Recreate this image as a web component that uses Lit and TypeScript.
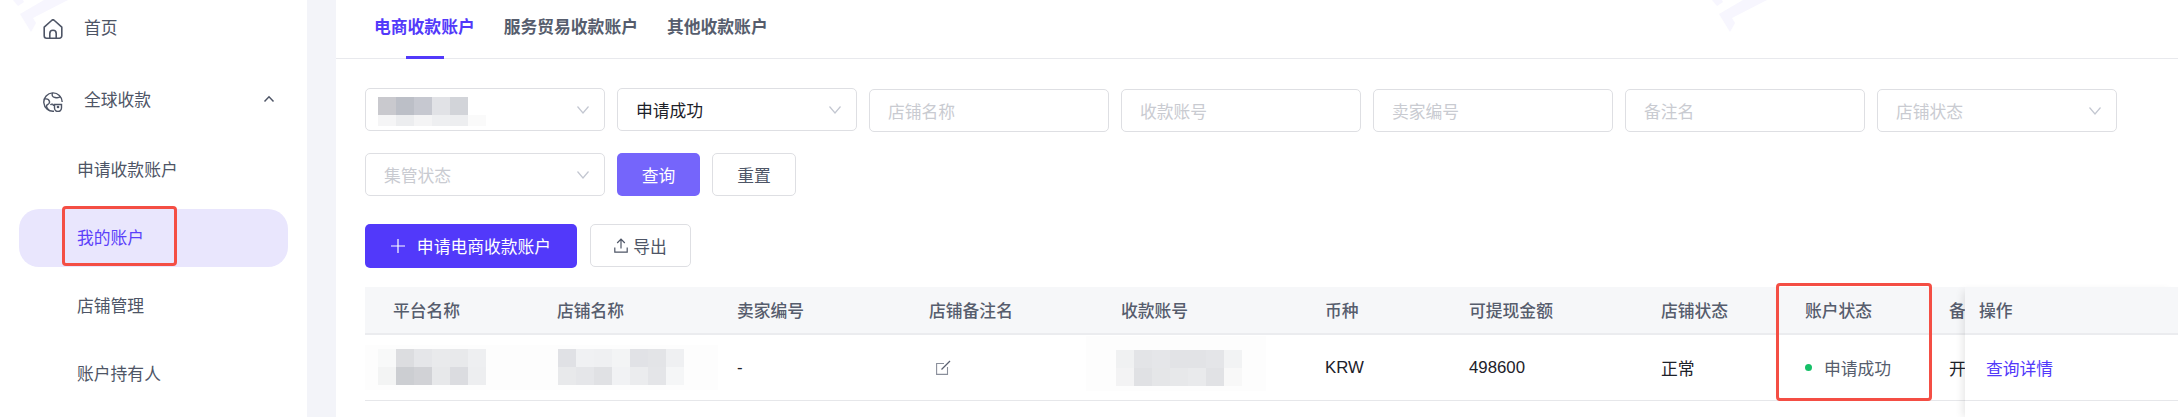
import { LitElement, html, css } from 'lit'
import { customElement } from 'lit/decorators.js'

const chevron = html`<svg class="chev" viewBox="0 0 14 10"><path d="M1.500 1.500 7 8l5.500-6.500" fill="none" stroke="#c3c7d1" stroke-width="1.200"/></svg>`

// mosaic that stands in for the masked values
function mosaic(cls: string, rows: string[][]) {
  return html`<div class="mosaic ${cls}">
    ${rows.map((r) => html`<div class="mrow">${r.map((c) => html`<i style="background:${c}"></i>`)}</div>`)}
  </div>`
}

const columns = [
  { label: '平台名称', w: 164 },
  { label: '店铺名称', w: 180 },
  { label: '卖家编号', w: 192 },
  { label: '店铺备注名', w: 192 },
  { label: '收款账号', w: 204 },
  { label: '币种', w: 144 },
  { label: '可提现金额', w: 192 },
  { label: '店铺状态', w: 144 },
  { label: '账户状态', w: 144 },
  { label: '备', w: 44 },
]

@customElement('app-root')
export class AppRoot extends LitElement {
  static styles = css`
    :host {
      display: block;
      width: 2178px;
      height: 417px;
      overflow: hidden;
      position: relative;
      font-family: 'Liberation Sans', 'Noto Sans CJK SC', sans-serif;
      font-size: 16.8px;
      color: #1d2129;
      background: #f3f4f9;
    }
    .page {
      display: flex;
      height: 417px;
    }
    .side {
      width: 307px;
      flex: none;
      background: #fff;
      color: #4e5566;
      box-sizing: border-box;
      padding: 0 19px;
    }
    .top {
      display: flex;
      align-items: center;
      height: 54px;
      padding-left: 24px;
      gap: 21px;
    }
    .top + .top {
      margin-top: 18px;
    }
    .top svg.ic {
      width: 20px;
      height: 20px;
      flex: none;
    }
    .top svg.home {
      margin-top: 3px;
    }
    .top svg.globe {
      margin-top: 6px;
    }
    .top .up {
      width: 12px;
      height: 8px;
      margin-left: 91px;
    }
    .subs {
      margin-top: 15px;
      display: flex;
      flex-direction: column;
      gap: 10px;
    }
    .sub {
      height: 58px;
      line-height: 60px;
      padding-left: 58px;
      border-radius: 20px;
      position: relative;
    }
    .sub.on {
      background: #e9e6fd;
      color: #5b40fa;
    }
    .mark {
      position: absolute;
      box-sizing: border-box;
      border: 3px solid #f44e44;
      border-radius: 4px;
    }
    .side-mark {
      left: 43px;
      top: -3px;
      width: 115px;
      height: 60px;
    }
    .main {
      margin-left: 29px;
      flex: 1;
      background: #fff;
      position: relative;
      min-width: 0;
      overflow: hidden;
    }
    .tabs {
      height: 59px;
      box-sizing: border-box;
      border-bottom: 1px solid #e8e9ed;
      display: flex;
      gap: 29px;
      padding-left: 38px;
      font-weight: 600;
      color: #565d6d;
    }
    .tab {
      line-height: 55px;
      position: relative;
    }
    .tab.on {
      color: #5239fa;
    }
    .tab.on::after {
      content: '';
      position: absolute;
      left: 32px;
      bottom: -1px;
      width: 38px;
      height: 3px;
      background: #5239fa;
    }
    .filters {
      margin: 29px 0 0 29px;
      display: grid;
      grid-template-columns: repeat(7, 240px);
      gap: 21px 12px;
    }
    .field {
      height: 43px;
      box-sizing: border-box;
      border: 1px solid #dedfe3;
      border-radius: 5px;
      display: flex;
      align-items: center;
      padding: 0 14px 0 18px;
      color: #c9cbd1;
      position: relative;
    }
    .field.sel {
      color: #1d2129;
    }
    .field.input {
      margin-top: 1px;
    }
    .chev {
      width: 14px;
      height: 10px;
      margin-left: auto;
    }
    .actions {
      display: flex;
      gap: 12px;
    }
    .btn {
      height: 43px;
      box-sizing: border-box;
      border: 1px solid #dedfe3;
      border-radius: 5px;
      display: flex;
      align-items: center;
      justify-content: center;
      color: #4e5566;
      background: #fff;
    }
    .query {
      width: 83px;
      border: none;
      background: #7565fb;
      color: #fff;
    }
    .reset {
      width: 84px;
    }
    .tools {
      display: flex;
      gap: 13px;
      margin: 28px 0 0 29px;
    }
    .add {
      width: 212px;
      height: 44px;
      border: none;
      background: #5239fa;
      color: #fff;
      gap: 12px;
    }
    .add svg {
      width: 14px;
      height: 14px;
    }
    .export {
      width: 101px;
      gap: 5px;
    }
    .export svg {
      width: 14px;
      height: 15px;
    }
    .table {
      margin: 19px 0 0 29px;
      position: relative;
    }
    .row {
      display: flex;
      align-items: center;
    }
    .head {
      height: 48px;
      box-sizing: border-box;
      background: #f6f7f9;
      border-bottom: 2px solid #ebecef;
      color: #565d6d;
      font-weight: 500;
    }
    .body {
      height: 66px;
      box-sizing: border-box;
      border-bottom: 1px solid #e6e7ea;
    }
    .cell {
      flex: none;
      box-sizing: border-box;
      padding-left: 28px;
      white-space: nowrap;
      height: 100%;
      display: flex;
      align-items: center;
    }
    .mosaic {
      background: #fdfdfd;
    }
    .mrow {
      display: flex;
    }
    .mrow i {
      display: block;
      width: 18px;
      height: 18px;
    }
    .m-filter {
      background: none;
      margin: 3px 0 0 -6px;
    }
    .m-filter .mrow + .mrow i {
      height: 11px;
    }
    .m-platform {
      margin-left: -28px;
      padding: 4px 43px 5px 13px;
    }
    .m-shop {
      margin-left: -28px;
      padding: 4px 34px 5px 29px;
    }
    .m-account {
      margin: 0 0 9px -35px;
      padding: 14px 24px 5px 30px;
    }
    .edit {
      width: 15px;
      height: 15px;
      margin-left: 7px;
    }
    .status {
      color: #565d6d;
      gap: 12px;
    }
    .dot {
      width: 7px;
      height: 7px;
      border-radius: 50%;
      background: #16c068;
    }
    .fixed {
      position: absolute;
      left: 1600px;
      top: 0;
      width: 213px;
      background: #fff;
      box-shadow: -6px 0 8px -4px rgba(0, 0, 0, 0.1);
    }
    .fixed .cell {
      padding-left: 14px;
    }
    .link {
      color: #5239fa;
    }
    .fixed .body .cell {
      padding-left: 21px;
    }
    .fixed-tail {
      height: 20px;
    }
    .table-mark {
      left: 1411px;
      top: -4px;
      width: 156px;
      height: 118px;
    }
    .wm {
      position: absolute;
      top: 0;
      width: 100px;
      height: 40px;
      pointer-events: none;
    }
    .wm-side {
      left: -19px;
    }
    .wm-main {
      left: 1680px;
    }
  `

  render() {
    return html`
      <div class="page">
        <aside class="side">
          <div class="top">
            <svg class="ic home" viewBox="0 0 20 20" fill="none" stroke="#4e5566" stroke-width="1.600" stroke-linejoin="round">
              <path d="M1.200 8.200 8.600 1.500a2 2 0 0 1 2.800 0l7.400 6.700v8.600a2.400 2.400 0 0 1-2.400 2.400H3.600a2.400 2.400 0 0 1-2.400-2.400z" />
              <path d="M6.800 19v-4.500a3.200 3.200 0 0 1 6.400 0V19" />
            </svg>
            <span>首页</span>
          </div>
          <div class="top">
            <svg class="ic globe" viewBox="0 0 20 20" fill="none" stroke="#4e5566" stroke-width="1.400">
              <path d="M11 19.200A9.200 9.200 0 1 1 19.200 10" />
              <path d="M1.500 7c2.500-.5 4.500.5 5 2.500s-1.500 3-2.500 3.500-.5 3 2 5" />
              <path d="M9.500 1c-1 2.500 0 4 2.500 4.500s4 .5 5.500-1" />
              <path d="M7.500 13c1-1.500 3-1 3 1" />
              <path d="M11.500 12.500h7v3.500a3.500 3.500 0 0 1-7 0z" fill="#fff" />
              <circle cx="15" cy="15" r="1.300" fill="#4e5566" stroke="none" />
            </svg>
            <span>全球收款</span>
            <svg class="up" viewBox="0 0 12 8"><path d="M1.500 6.500 6 1.800l4.500 4.700" fill="none" stroke="#4e5566" stroke-width="1.500" /></svg>
          </div>
          <div class="subs">
            <div class="sub">申请收款账户</div>
            <div class="sub on">我的账户<span class="mark side-mark"></span></div>
            <div class="sub">店铺管理</div>
            <div class="sub">账户持有人</div>
          </div>
        </aside>
        <main class="main">
          <div class="tabs">
            <div class="tab on">电商收款账户</div>
            <div class="tab">服务贸易收款账户</div>
            <div class="tab">其他收款账户</div>
          </div>
          <div class="filters">
            <div class="field">${mosaic('m-filter', [
              ['#c9c9ce', '#bcbfc7', '#c6c8d0', '#e1e2e6', '#d2d4d9'],
              ['#f5f5f6', '#ecedef', '#f4f4f5', '#eeeff1', '#edeef0', '#fafafa'],
            ])}${chevron}</div>
            <div class="field sel">申请成功${chevron}</div>
            <div class="field input">店铺名称</div>
            <div class="field input">收款账号</div>
            <div class="field input">卖家编号</div>
            <div class="field input">备注名</div>
            <div class="field input">店铺状态${chevron}</div>
            <div class="field">集管状态${chevron}</div>
            <div class="actions">
              <div class="btn query">查询</div>
              <div class="btn reset">重置</div>
            </div>
          </div>
          <div class="tools">
            <div class="btn add">
              <svg viewBox="0 0 14 14"><path d="M7 0v14M0 7h14" stroke="#fff" stroke-width="1.200" /></svg>
              申请电商收款账户
            </div>
            <div class="btn export">
              <svg viewBox="0 0 14 15" fill="none" stroke="#4e5566" stroke-width="1.200">
                <path d="M7 10.500V1.200M3.200 5 7 1.200 10.800 5M.8 9.500v4.700h12.400V9.500" />
              </svg>
              导出
            </div>
          </div>
          <div class="table">
            <div class="row head">
              ${columns.map((c) => html`<div class="cell" style="width:${c.w}px">${c.label}</div>`)}
            </div>
            <div class="row body">
              <div class="cell" style="width:164px">${mosaic('m-platform', [
                ['#f8f9f9', '#dcdde0', '#e5e6e9', '#e9eaec', '#e8e9eb', '#eeeff1'],
                ['#f3f4f4', '#ccced2', '#d1d2d6', '#e7e8ea', '#dbdce0', '#edeef0'],
              ])}</div>
              <div class="cell" style="width:180px">${mosaic('m-shop', [
                ['#e0e1e5', '#f0f1f3', '#eff0f2', '#f3f4f5', '#e1e2e6', '#e3e4e7', '#eff0f2'],
                ['#e8e9eb', '#e5e6e9', '#e0e1e4', '#f1f2f4', '#ebecee', '#e4e5e8', '#f5f6f7'],
              ])}</div>
              <div class="cell" style="width:192px">-</div>
              <div class="cell" style="width:192px">
                <svg class="edit" viewBox="0 0 15 15" fill="none">
                  <path d="M8 3.500H.6v10.900h10.900V7" stroke="#8a8f9b" stroke-width="1.100" />
                  <path d="M5.500 9.500 14 1" stroke="#5a6070" stroke-width="1.300" />
                </svg>
              </div>
              <div class="cell" style="width:204px">${mosaic('m-account', [
                ['#f0f1f2', '#e3e4e7', '#e5e6e9', '#e2e3e6', '#e2e3e6', '#e4e5e8', '#f2f3f4'],
                ['#f3f3f4', '#e0e1e4', '#e5e6e8', '#e7e8ea', '#e9eaec', '#e1e2e5', '#f8f8f8'],
              ])}</div>
              <div class="cell" style="width:144px">KRW</div>
              <div class="cell" style="width:192px">498600</div>
              <div class="cell" style="width:144px">正常</div>
              <div class="cell status" style="width:144px"><span class="dot"></span>申请成功</div>
              <div class="cell" style="width:44px">开</div>
            </div>
            <div class="fixed">
              <div class="row head"><div class="cell">操作</div></div>
              <div class="row body"><div class="cell link">查询详情</div></div>
              <div class="fixed-tail"></div>
            </div>
            <span class="mark table-mark"></span>
          </div>
        </main>
      </div>
      <svg class="wm wm-side" viewBox="0 0 100 40"><path d="M32 0l5 6 6-4-1-2zM39 14l11 18 5-9-3-5L87 0H63z" fill="#f7f6fe" /></svg>
      <svg class="wm wm-main" viewBox="0 0 100 40"><path d="M32 0l5 6 6-4-1-2zM39 14l11 18 5-9-3-5L87 0H63z" fill="#f7f6fe" /></svg>
    `
  }
}
